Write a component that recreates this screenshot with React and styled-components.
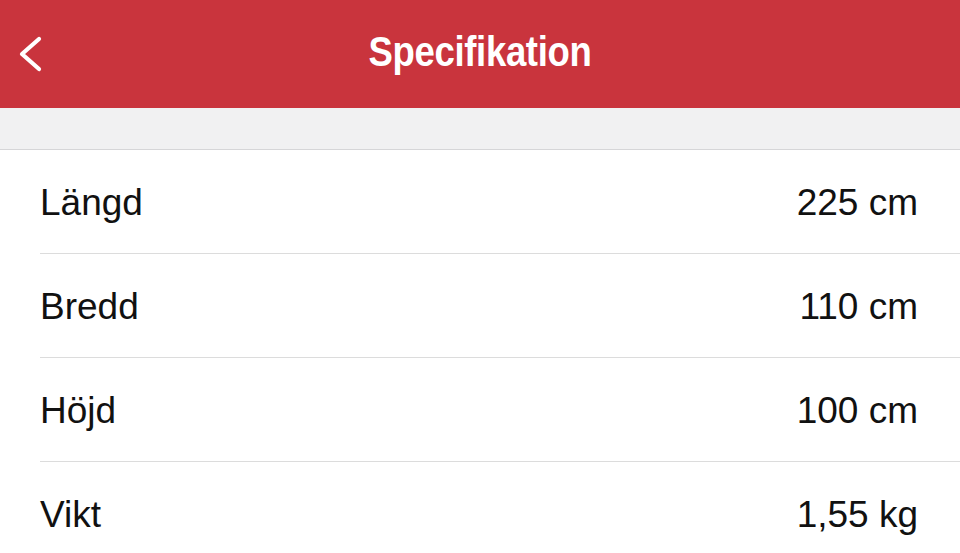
import React from "react";
import styled, { createGlobalStyle } from "styled-components";

const Global = createGlobalStyle`
  html, body { margin: 0; padding: 0; background: #ffffff; }
  body { font-family: "Liberation Sans", Arial, sans-serif; overflow: hidden; }
`;

const Page = styled.div`
  width: 960px;
  height: 553px;
  overflow: hidden;
  display: flex;
  flex-direction: column;
  background: #ffffff;
`;

const Header = styled.header`
  height: 108px;
  flex: none;
  background: #c9343d;
  display: grid;
  grid-template-columns: 80px 1fr 80px;
  align-items: center;
`;

const BackButton = styled.button`
  border: 0;
  background: transparent;
  padding: 0 0 0 17px;
  height: 100%;
  display: flex;
  align-items: center;
  cursor: pointer;
`;

const Title = styled.h1`
  margin: 0;
  text-align: center;
  color: #ffffff;
  font-family: "Liberation Sans", Arial, sans-serif;
  font-weight: 700;
  font-size: 42px;
  letter-spacing: -0.4px;
  line-height: 1;
  padding-bottom: 4px;
  transform: scaleX(0.87);
`;

const Band = styled.div`
  height: 41px;
  flex: none;
  background: #f1f1f2;
  border-bottom: 1px solid #d6d6d8;
`;

const List = styled.ul`
  list-style: none;
  margin: 0;
  padding: 0;
`;

const Row = styled.li`
  height: 103px;
  margin-left: 40px;
  padding-right: 42px;
  display: flex;
  align-items: center;
  justify-content: space-between;
  border-bottom: 1px solid #dcdcdc;
  font-size: 37px;
  color: #111111;
`;

const Label = styled.span`
  padding-top: 3px;
`;

const Value = styled.span`
  padding-top: 3px;
`;

const specs = [
  ["Längd", "225 cm"],
  ["Bredd", "110 cm"],
  ["Höjd", "100 cm"],
  ["Vikt", "1,55 kg"],
];

export default function App() {
  return (
    <Page>
      <Global />
      <Header>
        <BackButton aria-label="Tillbaka">
          <svg width="26" height="38" viewBox="0 0 26 38">
            <path
              d="M22 4 L5 19 L22 34"
              fill="none"
              stroke="#ffffff"
              strokeWidth="4.2"
              strokeLinecap="round"
              strokeLinejoin="round"
            />
          </svg>
        </BackButton>
        <Title>Specifikation</Title>
        <span />
      </Header>
      <Band />
      <List>
        {specs.map(([k, v]) => (
          <Row key={k}>
            <Label>{k}</Label>
            <Value>{v}</Value>
          </Row>
        ))}
      </List>
    </Page>
  );
}
